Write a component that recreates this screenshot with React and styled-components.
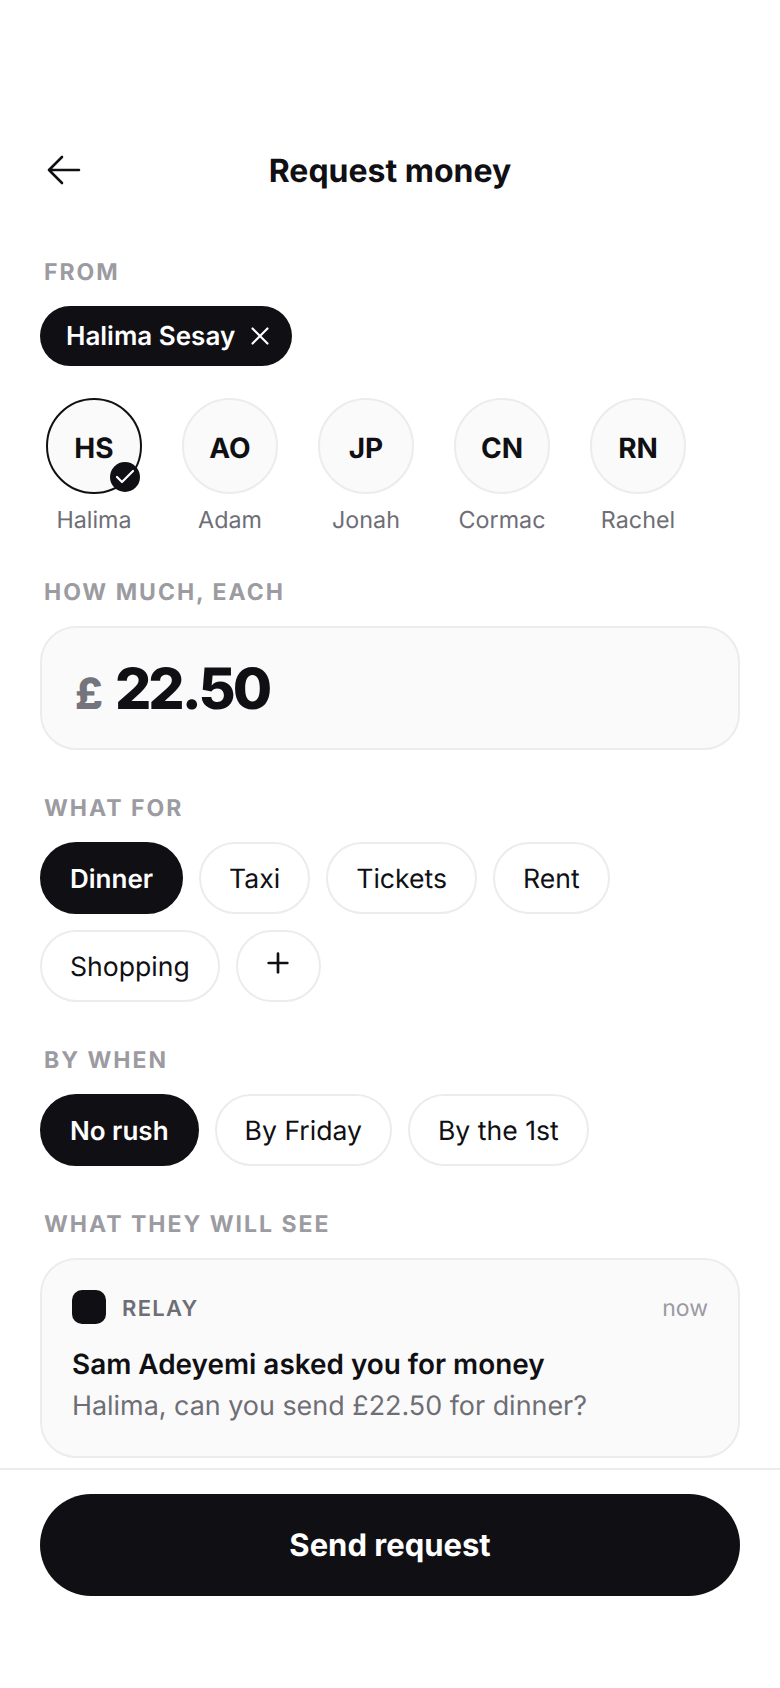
import styled, { createGlobalStyle } from "styled-components";
import { Check, Plus, X } from "lucide-react";

const people = [
  { initials: "HS", name: "Halima", selected: true },
  { initials: "AO", name: "Adam" },
  { initials: "JP", name: "Jonah" },
  { initials: "CN", name: "Cormac" },
  { initials: "RN", name: "Rachel" },
];

const reasons = ["Dinner", "Taxi", "Tickets", "Rent", "Shopping"];
const deadlines = ["No rush", "By Friday", "By the 1st"];

const GlobalStyle = createGlobalStyle`
  html, body {
    margin: 0;
    padding: 0;
    background: #fff;
  }
  body {
    font-family: Inter, "Liberation Sans", sans-serif;
    color: #101014;
    text-rendering: geometricPrecision;
  }
  * {
    box-sizing: border-box;
  }
`;

const App = () => {
  return (
    <Page>
      <GlobalStyle />
      <Scroll>
        <Header>
          <BackButton aria-label="Back">
            <svg width="34" height="30" viewBox="0 0 34 30" fill="none" stroke="currentColor" strokeWidth="2.6" strokeLinecap="round" strokeLinejoin="round">
              <path d="M32 15H2M15 2 2 15l13 13" />
            </svg>
          </BackButton>
          <Title>Request money</Title>
        </Header>

        <FromLabel>FROM</FromLabel>
        <SelectedChip>
          Halima Sesay
          <X size={30} strokeWidth={1.7} />
        </SelectedChip>

        <People>
          {people.map((person) => (
            <Person key={person.initials}>
              <Avatar $selected={person.selected}>
                {person.initials}
                {person.selected && (
                  <CheckBadge>
                    <Check size={24} strokeWidth={2.2} />
                  </CheckBadge>
                )}
              </Avatar>
              <PersonName>{person.name}</PersonName>
            </Person>
          ))}
        </People>

        <AmountLabel>HOW MUCH, EACH</AmountLabel>
        <AmountBox>
          <Currency>£</Currency>
          <Amount>22.50</Amount>
        </AmountBox>

        <SectionLabel>WHAT FOR</SectionLabel>
        <Pills>
          {reasons.map((reason, index) => (
            <Pill key={reason} $active={index === 0}>
              {reason}
            </Pill>
          ))}
          <AddPill aria-label="Add">
            <Plus size={32} strokeWidth={2} />
          </AddPill>
        </Pills>

        <SectionLabel>BY WHEN</SectionLabel>
        <Pills>
          {deadlines.map((deadline, index) => (
            <Pill key={deadline} $active={index === 0}>
              {deadline}
            </Pill>
          ))}
        </Pills>

        <PreviewLabel>WHAT THEY WILL SEE</PreviewLabel>
        <Preview>
          <PreviewTop>
            <AppIcon />
            <AppName>RELAY</AppName>
            <When>now</When>
          </PreviewTop>
          <PreviewTitle>Sam Adeyemi asked you for money</PreviewTitle>
          <PreviewBody>Halima, can you send £22.50 for dinner?</PreviewBody>
        </Preview>
      </Scroll>

      <Footer>
        <SendButton>Send request</SendButton>
      </Footer>
    </Page>
  );
};

export default App;

const Page = styled.div`
  display: flex;
  flex-direction: column;
  width: 780px;
  height: 1688px;
  overflow: hidden;
  background: #fff;
`;

const Scroll = styled.div`
  flex: 1;
  min-height: 0;
  padding: 0 40px;
`;

const Header = styled.header`
  position: relative;
  display: flex;
  align-items: center;
  justify-content: center;
  height: 60px;
  margin-top: 140px;
`;

const BackButton = styled.button`
  position: absolute;
  left: 7px;
  top: 15px;
  display: flex;
  padding: 0;
  border: 0;
  background: none;
  color: #101014;
`;

const Title = styled.h1`
  margin: 0;
  font-size: 32px;
  font-weight: 700;
`;

const SectionLabel = styled.div`
  margin: 44px 0 20px;
  padding-left: 4px;
  color: #9b9ba1;
  font-size: 23px;
  line-height: 28px;
  font-weight: 700;
  letter-spacing: 2px;
`;

const FromLabel = styled(SectionLabel)`
  margin-top: 58px;
`;

const AmountLabel = styled(SectionLabel)`
  margin-top: 42px;
`;

const PreviewLabel = styled(SectionLabel)`
  margin-top: 44px;
`;

const SelectedChip = styled.div`
  display: inline-flex;
  align-items: center;
  gap: 10px;
  height: 60px;
  padding: 0 17px 0 26px;
  border-radius: 30px;
  background: #101014;
  color: #fff;
  font-size: 26px;
  font-weight: 600;
`;

const People = styled.div`
  display: flex;
  gap: 28px;
  margin-top: 32px;
`;

const Person = styled.div`
  display: flex;
  flex-direction: column;
  align-items: center;
  gap: 10px;
  width: 108px;
`;

const Avatar = styled.div`
  position: relative;
  display: flex;
  align-items: center;
  justify-content: center;
  width: 96px;
  height: 96px;
  padding-top: 4px;
  border-radius: 50%;
  border: 2px solid ${({ $selected }) => ($selected ? "#101014" : "#ececee")};
  background: #fafafa;
  font-size: 28px;
  font-weight: 700;
`;

const CheckBadge = styled.span`
  position: absolute;
  right: 0;
  bottom: 0;
  display: flex;
  align-items: center;
  justify-content: center;
  width: 30px;
  height: 30px;
  border-radius: 50%;
  background: #101014;
  color: #fff;
`;

const PersonName = styled.div`
  color: #6e6e76;
  font-size: 23.3px;
  line-height: 32px;
`;

const AmountBox = styled.div`
  display: flex;
  align-items: baseline;
  gap: 12px;
  height: 124px;
  padding: 26px 33px 0;
  border: 2px solid #ececee;
  border-radius: 36px;
  background: #fafafa;
`;

const Currency = styled.span`
  color: #74747c;
  font-size: 43px;
  font-weight: 800;
`;

const Amount = styled.span`
  font-size: 57px;
  line-height: 70px;
  font-weight: 800;
  letter-spacing: -3px;
`;

const Pills = styled.div`
  display: flex;
  flex-wrap: wrap;
  gap: 16px;
`;

const Pill = styled.button`
  display: flex;
  align-items: center;
  justify-content: center;
  height: 72px;
  padding: 2px 28px 0;
  border: 2px solid ${({ $active }) => ($active ? "#101014" : "#ececee")};
  border-radius: 36px;
  background: ${({ $active }) => ($active ? "#101014" : "#fff")};
  color: ${({ $active }) => ($active ? "#fff" : "#101014")};
  font-family: inherit;
  font-size: ${({ $active }) => ($active ? "26px" : "26.6px")};
  font-weight: ${({ $active }) => ($active ? 600 : 400)};
  text-rendering: inherit;
`;

const AddPill = styled(Pill)`
  width: 85px;
  padding: 0 0 6px;
`;

const Preview = styled.div`
  height: 200px;
  padding: 30px 30px 0;
  border: 2px solid #ececee;
  border-radius: 36px;
  background: #fafafa;
`;

const PreviewTop = styled.div`
  display: flex;
  align-items: center;
  gap: 16px;
`;

const AppIcon = styled.div`
  width: 34px;
  height: 34px;
  border-radius: 10px;
  background: #101014;
`;

const AppName = styled.div`
  padding-top: 4px;
  color: #6e6e76;
  font-size: 22px;
  font-weight: 600;
  letter-spacing: 1.3px;
`;

const When = styled.div`
  margin-left: auto;
  padding-top: 2px;
  color: #9b9ba1;
  font-size: 23px;
`;

const PreviewTitle = styled.div`
  margin-top: 22px;
  font-size: 27.9px;
  line-height: 36px;
  font-weight: 600;
`;

const PreviewBody = styled.div`
  margin-top: 6px;
  color: #6e6e76;
  font-size: 26.9px;
  line-height: 36px;
`;

const Footer = styled.footer`
  flex: none;
  height: 220px;
  padding: 24px 40px 0;
  border-top: 2px solid #ececee;
`;

const SendButton = styled.button`
  width: 100%;
  height: 102px;
  border: 0;
  border-radius: 51px;
  background: #101014;
  color: #fff;
  font-family: inherit;
  font-size: 31px;
  font-weight: 700;
  text-rendering: inherit;
`;
